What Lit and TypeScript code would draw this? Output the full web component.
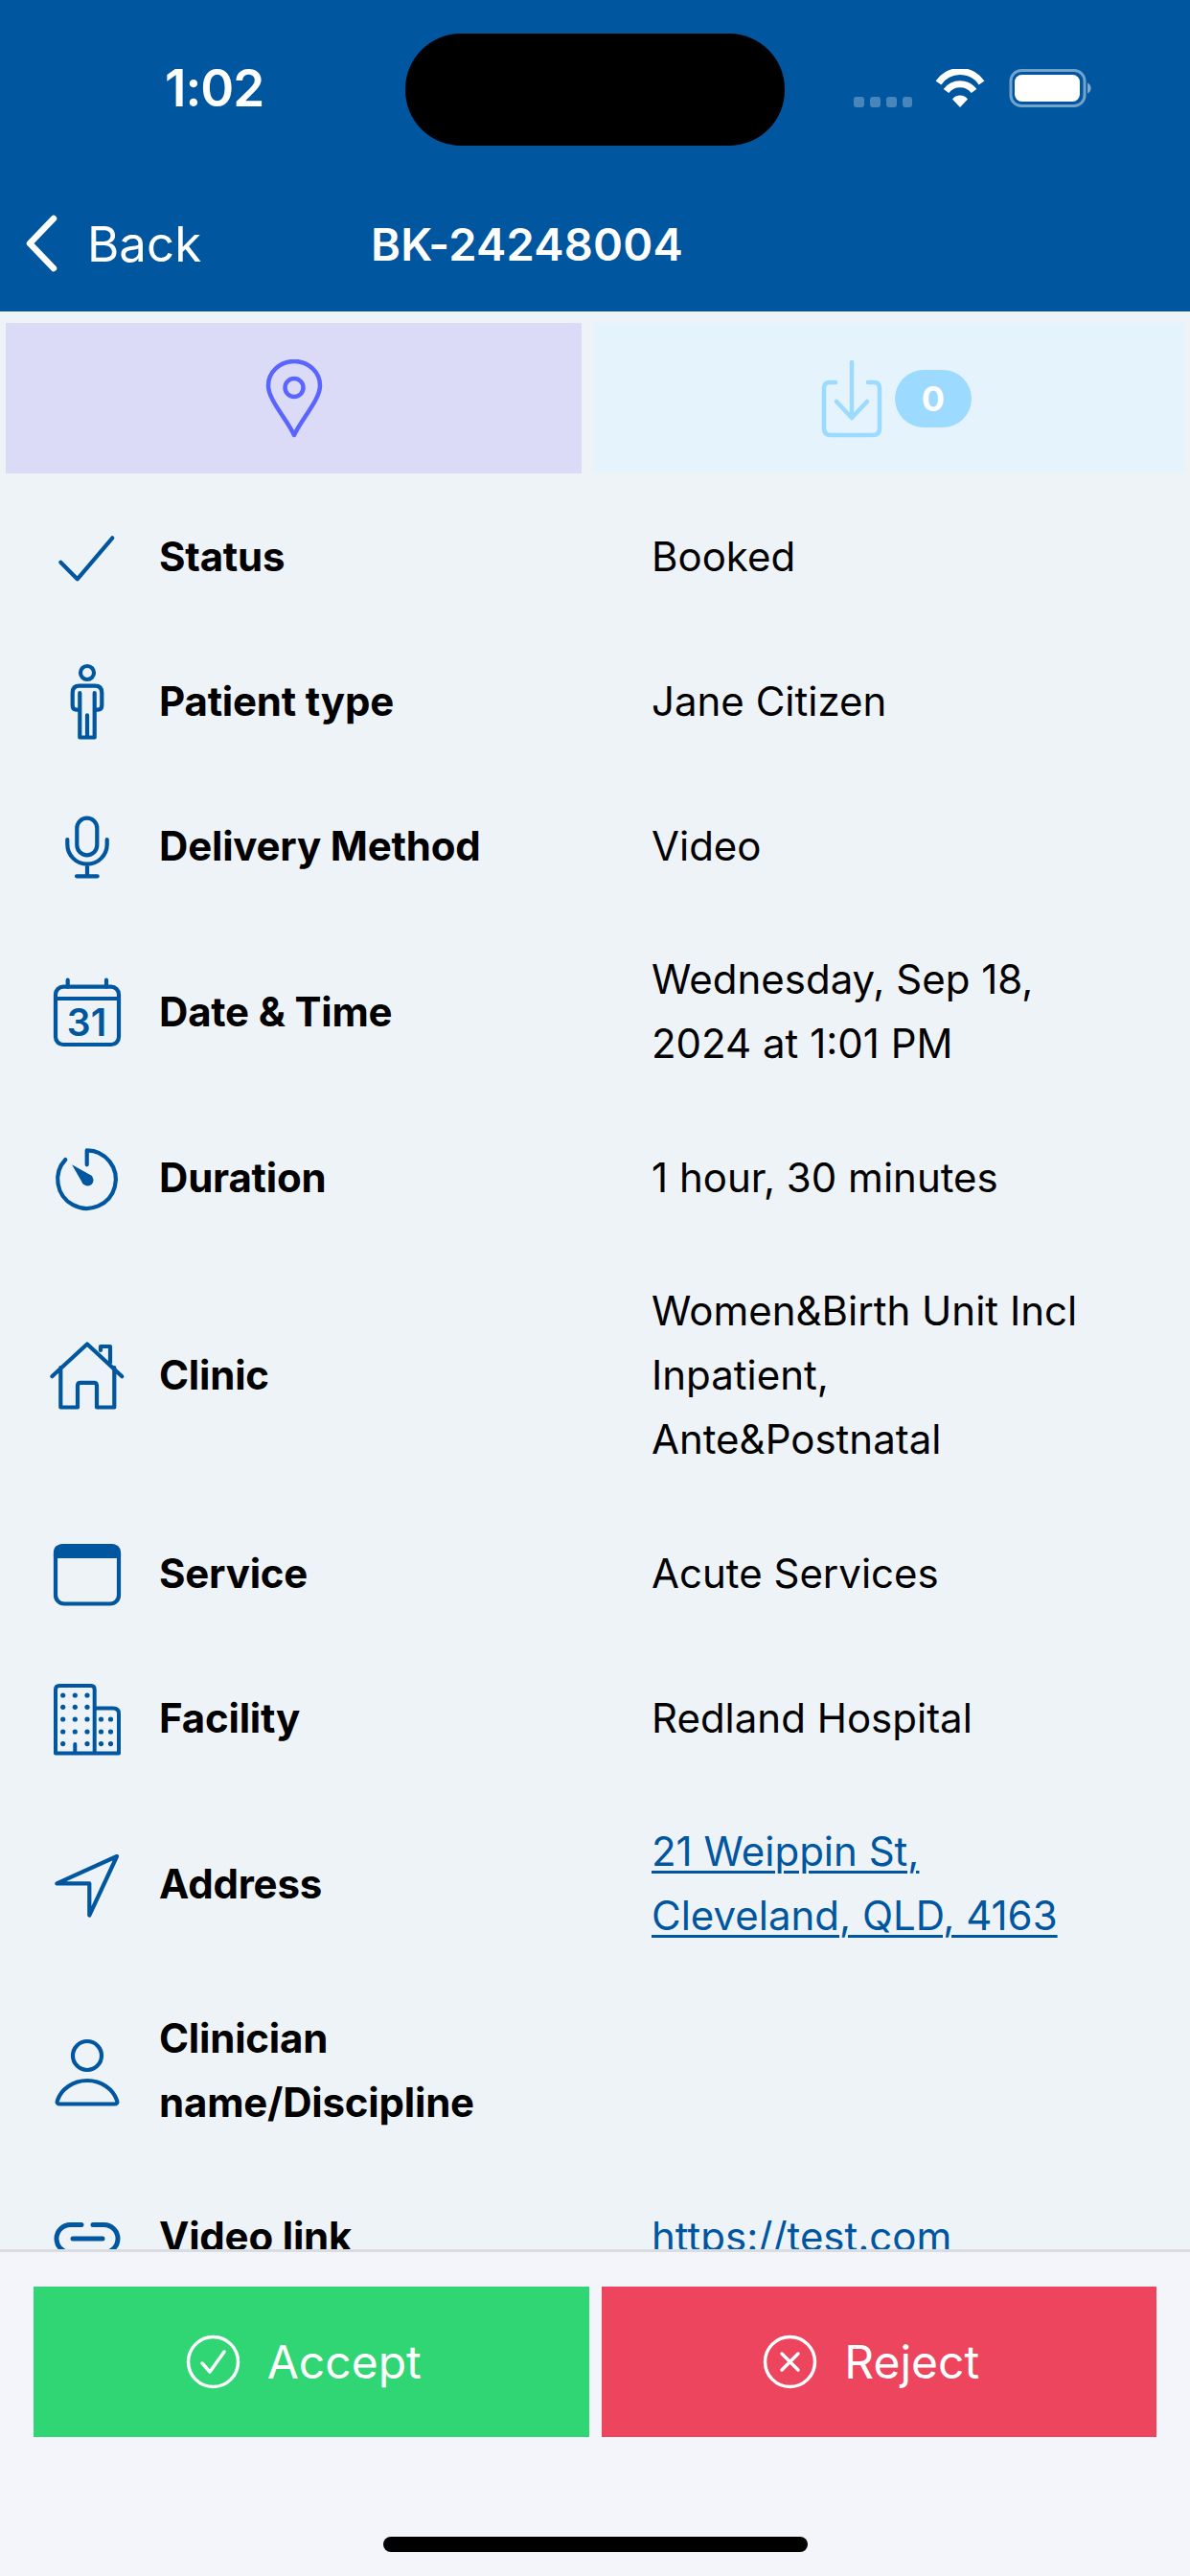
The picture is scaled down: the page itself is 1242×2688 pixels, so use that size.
import { LitElement, html, css } from "lit";
import { customElement } from "lit/decorators.js";

const ic = (body: unknown) => html`<svg class="ic" viewBox="0 0 90 90" fill="none" stroke="#00569f" stroke-width="4.2" stroke-linecap="round" stroke-linejoin="round">${body}</svg>`;

const icons = {
  check: ic(html`<svg><path d="M17.3 51.7 34.7 69.3 71.3 26.3"/></svg>`),
  person: ic(html`<svg><circle cx="45" cy="16" r="7"/><path d="M37.3 37V83.5H52.7V37M37.3 54.7H34Q29.7 54.7 29.7 50V37Q29.7 29.7 37 29.7H53Q60.3 29.7 60.3 37V50Q60.3 54.7 56 54.7H52.7M45 60.3V83.5"/></svg>`),
  mic: ic(html`<svg><rect x="34.3" y="16.7" width="21" height="38.6" rx="10.5"/><path d="M24.3 39V44a20.7 20.7 0 0 0 41.4 0V39M45 64.7V77.3M34 77.3H55.7"/></svg>`),
  cal: ic(html`<svg><rect x="12" y="19.7" width="66" height="60.3" rx="8"/><path d="M12 32H78M24.7 12.7V19.7M65 12.7V19.7"/><text x="44.5" y="71" text-anchor="middle" class="cal">31</text></svg>`),
  timer: ic(html`<svg><path d="M22.3 27A30.3 30.3 0 1 0 44.7 17.3V32.3"/><path d="M29 32.3 50 44 41 53Z" fill="#00569f" stroke="none"/><circle cx="45.5" cy="48.5" r="6" fill="#00569f" stroke="none"/></svg>`),
  house: ic(html`<svg><path d="M8.3 46.2 45 12.5 81.3 46.2M17.3 37V78.5H35V56Q35 52.8 38 52.8H52Q55 52.8 55 56V78.5H73.3V37M59 19V15H69V31.8"/></svg>`),
  service: ic(html`<svg><rect x="12" y="17" width="66" height="60.5" rx="9"/><path d="M12 28V24Q12 17 21 17H69Q78 17 78 24V28Z" fill="#00569f"/><path d="M12 28H78" stroke-width="4"/></svg>`),
  facility: ic(html`<svg><path d="M52.7 82.5H12V16Q12 12 16 12H49Q52.7 12 52.7 16V82.5H78V41Q78 35.5 72 35.5H52.7M32.3 73V82" stroke-width="4"/><g fill="#00569f" stroke="none">
    ${[22, 34.3, 47, 60, 72.6].flatMap((y) => [19.7, 32.3, 45].filter((x) => !(y > 70 && x === 32.3)).map((x) => html`<svg><circle cx=${x} cy=${y} r="2.6"/></svg>`))}
    ${[47, 60, 72.6].flatMap((y) => [59.5, 69.5].map((x) => html`<svg><circle cx=${x} cy=${y} r="2.6"/></svg>`))}
  </g></svg>`),
  nav: ic(html`<svg><path d="M76 17 13.3 45.3H47.3V78.6Z"/></svg>`),
  user: ic(html`<svg><circle cx="45" cy="30" r="15"/><path d="M17 80.5H73Q77.5 80.5 76 76.5C72 65 60 56 45 56S18 65 14 76.5Q12.5 80.5 17 80.5Z"/></svg>`),
  link: ic(html`<svg><g stroke-width="5"><path d="M39 33.5H27.5a14.5 14.5 0 0 0 0 29H39M51 33.5H62.5a14.5 14.5 0 0 1 0 29H51M30 48H61"/></g></svg>`),
};

type Row = { icon: keyof typeof icons; label: string; value?: string[]; link?: boolean };

const rows: Row[] = [
  { icon: "check", label: "Status", value: ["Booked"] },
  { icon: "person", label: "Patient type", value: ["Jane Citizen"] },
  { icon: "mic", label: "Delivery Method", value: ["Video"] },
  { icon: "cal", label: "Date & Time", value: ["Wednesday, Sep 18,", "2024 at 1:01 PM"] },
  { icon: "timer", label: "Duration", value: ["1 hour, 30 minutes"] },
  { icon: "house", label: "Clinic", value: ["Women&Birth Unit Incl", "Inpatient,", "Ante&Postnatal"] },
  { icon: "service", label: "Service", value: ["Acute Services"] },
  { icon: "facility", label: "Facility", value: ["Redland Hospital"] },
  { icon: "nav", label: "Address", value: ["21 Weippin St,", "Cleveland, QLD, 4163"], link: true },
  { icon: "user", label: "Clinician name/Discipline" },
  { icon: "link", label: "Video link", value: ["https://test.com"], link: true },
];

@customElement("app-root")
export class AppRoot extends LitElement {
  static styles = css`
    :host {
      display: block;
      position: relative;
      width: 1242px;
      height: 2688px;
      overflow: hidden;
      background: #eef3f8;
      font-family: Inter, "Liberation Sans", sans-serif;
      color: #000;
    }
    .header { height: 325px; background: #00569f; color: #fff; display: flex; flex-direction: column; }
    .status { height: 185px; display: flex; align-items: flex-start; box-sizing: border-box; padding: 60px 0 0 172px; }
    .time { font-size: 53px; line-height: 64px; font-weight: 600; letter-spacing: -1px; width: 719px; }
    .sys { display: block; margin-top: 12px; }
    .island { position: absolute; left: 423px; top: 35px; width: 396px; height: 117px; border-radius: 58px; background: #000; }
    .nav { display: flex; align-items: center; height: 140px; margin-top: -1px; padding-left: 24px; box-sizing: border-box; padding-bottom: 0; }
    .chev { width: 40px; height: 64px; display: block; }
    .back { font-size: 51px; margin-left: 27px; width: 116px; white-space: nowrap; }
    .title { font-size: 47px; font-weight: 600; margin-left: 180px; letter-spacing: 0.2px; white-space: nowrap; }
    .tabs { display: flex; gap: 13px; padding: 12px 6px 10.5px; }
    .tab { flex: 1; height: 157px; display: flex; align-items: center; justify-content: center; }
    .tab.a { background: #dbdbf8; }
    .tab.b { background: #e5f3fc; gap: 13px; padding-left: 15px; }
    .pin { width: 60px; height: 82px; display: block; }
    .tray { width: 64px; height: 82px; display: block; }
    .badge { width: 80px; height: 60px; border-radius: 30px; background: #9cdbff; color: #fff; font-weight: 700; font-size: 36px; display: flex; align-items: center; justify-content: center; }
    .row { display: grid; grid-template-columns: 90px 484px 1fr; column-gap: 30px; align-items: center; min-height: 139px; box-sizing: border-box; padding: 30.5px 60px 30.5px 46px; font-size: 42px; line-height: 67px; }
    .ic { width: 90px; height: 90px; display: block; }
    .ic text.cal { font-family: Inter, sans-serif; font-size: 39px; font-weight: 600; fill: #00569f; stroke: none; }
    .label { font-weight: 700; letter-spacing: -0.2px; }
    .value { letter-spacing: 0; }
    .value div { white-space: nowrap; }
    .value.link { color: #00569f; text-decoration: underline; text-underline-offset: 5px; text-decoration-thickness: 3px; }
    .footer { position: absolute; left: 0; right: 0; top: 2347px; bottom: 0; background: #f3f5fa; border-top: 3px solid #d9dce0; }
    .btns { display: flex; gap: 13px; padding: 36px 35px 0; }
    .btn { flex: 1; height: 157px; display: flex; align-items: center; justify-content: center; gap: 28px; padding-right: 16px; box-sizing: border-box; color: #fff; font-size: 48px; }
    .btn.ok { background: #2fd673; }
    .btn.no { background: #ee455e; }
    .bi { width: 57px; height: 57px; display: block; }
    .home { position: absolute; left: 400px; top: 297px; width: 443px; height: 16px; border-radius: 8px; background: #000; }
  `;

  render() {
    return html`
      <div class="header">
        <div class="status">
          <div class="time">1:02</div>
          <svg class="sys" width="250" height="44" viewBox="0 0 250 44">
            <g fill="#fff" opacity=".28"><rect x="0" y="29" width="11" height="11" rx="3"/><rect x="17" y="29" width="11" height="11" rx="3"/><rect x="34" y="29" width="11" height="11" rx="3"/><rect x="51" y="29" width="10" height="11" rx="3"/></g>
            <g fill="none" stroke="#fff" stroke-width="7"><path d="M88.5 14.5a27 27 0 0 1 45 0"/><path d="M96.5 23a18 18 0 0 1 29 0"/></g>
            <path d="M103 31.5a10 10 0 0 1 16 0L111 40Z" fill="#fff"/>
            <rect x="164" y="1.5" width="77" height="37" rx="11" fill="none" stroke="#fff" stroke-opacity=".45" stroke-width="3"/>
            <rect x="168" y="6" width="68" height="28" rx="7.5" fill="#fff"/>
            <path d="M244 14.5a6 6 0 0 1 0 11Z" fill="#fff" fill-opacity=".5"/>
          </svg>
        </div>
        <div class="nav">
          <svg class="chev" viewBox="0 0 40 64" fill="none" stroke="#fff" stroke-width="6.5" stroke-linecap="round" stroke-linejoin="round"><path d="M32 6 7 32 32 58"/></svg>
          <div class="back">Back</div>
          <div class="title">BK-24248004</div>
        </div>
      </div>
      <div class="island"></div>
      <div class="tabs">
        <div class="tab a">
          <svg class="pin" viewBox="0 0 60 82" fill="none" stroke="#5a64ff" stroke-width="4.5" stroke-linejoin="round"><path d="M30 79C22 62 3 42 3 27.5A27 25.5 0 0 1 57 27.5C57 42 38 62 30 79Z"/><circle cx="30" cy="29.5" r="9.5"/></svg>
        </div>
        <div class="tab b">
          <svg class="tray" viewBox="0 0 64 82" fill="none" stroke="#9cdbff" stroke-width="4.5" stroke-linecap="round" stroke-linejoin="round"><path d="M15 24H9Q3 24 3 30V72Q3 79 10 79H54Q61 79 61 72V30Q61 24 55 24H49M32 3V60M16 44 32 61 48 44"/></svg>
          <div class="badge">0</div>
        </div>
      </div>
      ${rows.map((r) => html`
        <div class="row">
          ${icons[r.icon]}
          <div class="label">${r.label}</div>
          <div class="value ${r.link ? "link" : ""}">${(r.value ?? []).map((l) => html`<div>${l}</div>`)}</div>
        </div>`)}
      <div class="footer">
        <div class="btns">
          <div class="btn ok">
            <svg class="bi" viewBox="0 0 57 57" fill="none" stroke="#fff" stroke-width="3.5" stroke-linecap="round" stroke-linejoin="round"><circle cx="28.5" cy="28.5" r="26"/><path d="M17 30 25 39 40 18"/></svg>
            <span>Accept</span>
          </div>
          <div class="btn no">
            <svg class="bi" viewBox="0 0 57 57" fill="none" stroke="#fff" stroke-width="3.5" stroke-linecap="round" stroke-linejoin="round"><circle cx="28.5" cy="28.5" r="26"/><path d="M20 20 37 37M37 20 20 37"/></svg>
            <span>Reject</span>
          </div>
        </div>
        <div class="home"></div>
      </div>
    `;
  }
}
